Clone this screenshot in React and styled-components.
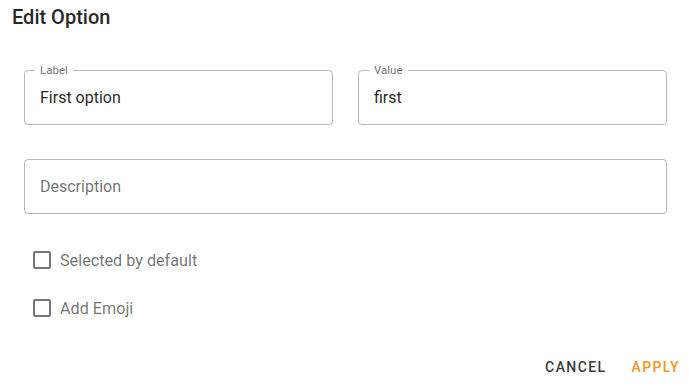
import React from 'react';
import styled, { createGlobalStyle } from 'styled-components';

const GlobalStyle = createGlobalStyle`
  body {
    margin: 0;
    background: #ffffff;
    font-family: Roboto, "Liberation Sans", Arial, sans-serif;
  }
`;

const Dialog = styled.div`
  width: 689px;
  height: 388px;
  box-sizing: border-box;
  background: #fff;
  display: flex;
  flex-direction: column;
`;

const Title = styled.h2`
  margin: 0;
  padding: 2px 12px 0;
  font-size: 20px;
  font-weight: 500;
  line-height: 30px;
  color: rgba(0, 0, 0, 0.87);
`;

const Content = styled.div`
  padding: 38px 22px 0 24px;
  display: flex;
  flex-direction: column;
`;

const Row = styled.div`
  display: grid;
  grid-template-columns: 1fr 1fr;
  gap: 25px;
`;

const FieldBox = styled.div`
  position: relative;
  height: 55px;
  box-sizing: border-box;
  border: 1px solid rgba(0, 0, 0, 0.28);
  border-radius: 4px;
  display: flex;
  align-items: center;
  padding: 0 15px;
  margin-top: ${p => p.$top || 0}px;
`;

const FloatLabel = styled.span`
  position: absolute;
  top: -8px;
  left: 10px;
  padding: 0 5px;
  background: #fff;
  font-size: 11.5px;
  line-height: 14px;
  color: rgba(0, 0, 0, 0.6);
`;

const FieldText = styled.span`
  font-size: 16px;
  color: ${p => (p.$placeholder ? 'rgba(0, 0, 0, 0.58)' : 'rgba(0, 0, 0, 0.87)')};
`;

const Checks = styled.div`
  margin-top: 25px;
  display: flex;
  flex-direction: column;
  gap: 6px;
`;

const CheckRow = styled.label`
  display: flex;
  align-items: center;
  height: 42px;
`;

const BoxWrap = styled.span`
  width: 42px;
  height: 42px;
  margin-left: -3px;
  display: flex;
  align-items: center;
  justify-content: center;
  color: rgba(0, 0, 0, 0.54);
`;

const CheckText = styled.span`
  font-size: 16.2px;
  color: rgba(0, 0, 0, 0.56);
  margin-left: -3px;
`;

const Actions = styled.div`
  margin-top: 20px;
  display: flex;
  justify-content: flex-end;
  gap: 9px;
  padding-right: 1px;
`;

const Button = styled.button`
  border: none;
  background: transparent;
  font-family: Roboto, "Liberation Sans", Arial, sans-serif;
  font-size: 14px;
  font-weight: 500;
  letter-spacing: 1.4px;
  text-transform: uppercase;
  height: 36px;
  min-width: 64px;
  padding: 6px 8px;
  color: ${p => p.$color};
  cursor: pointer;
`;

const CheckIcon = () => (
  <svg width="24" height="24" viewBox="0 0 24 24" fill="currentColor">
    <path d="M19 5v14H5V5h14m0-2H5c-1.1 0-2 .9-2 2v14c0 1.1.9 2 2 2h14c1.1 0 2-.9 2-2V5c0-1.1-.9-2-2-2z" />
  </svg>
);

export default function App() {
  return (
    <>
      <GlobalStyle />
      <Dialog>
        <Title>Edit Option</Title>
        <Content>
          <Row>
            <FieldBox>
              <FloatLabel>Label</FloatLabel>
              <FieldText>First option</FieldText>
            </FieldBox>
            <FieldBox>
              <FloatLabel>Value</FloatLabel>
              <FieldText>first</FieldText>
            </FieldBox>
          </Row>
          <FieldBox $top={34}>
            <FieldText $placeholder>Description</FieldText>
          </FieldBox>
          <Checks>
            <CheckRow>
              <BoxWrap><CheckIcon /></BoxWrap>
              <CheckText>Selected by default</CheckText>
            </CheckRow>
            <CheckRow>
              <BoxWrap><CheckIcon /></BoxWrap>
              <CheckText>Add Emoji</CheckText>
            </CheckRow>
          </Checks>
        </Content>
        <Actions>
          <Button $color="rgba(0, 0, 0, 0.8)">Cancel</Button>
          <Button $color="#f7941d">Apply</Button>
        </Actions>
      </Dialog>
    </>
  );
}
